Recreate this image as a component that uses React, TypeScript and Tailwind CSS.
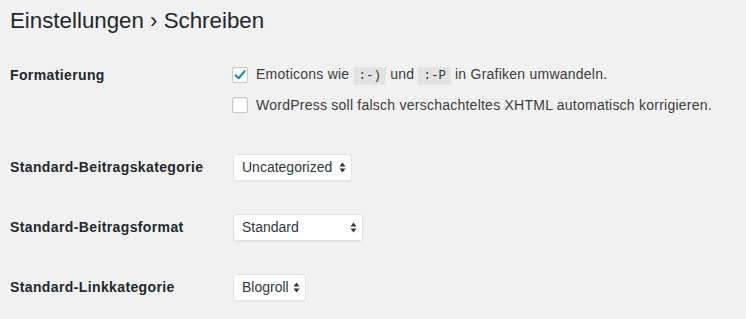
const Arrows = () => (
  <svg width="7" height="11" viewBox="0 0 7 11" className="shrink-0">
    <path d="M3.5 0.5 L6.5 4.5 L0.5 4.5 Z" fill="#32373c" />
    <path d="M3.5 10.5 L6.5 6.5 L0.5 6.5 Z" fill="#32373c" />
  </svg>
);

const Select = ({ value, width }: { value: string; width: string }) => (
  <div
    className={`${width} h-[27px] flex items-center justify-between pl-[8px] pr-[5px] bg-white border border-[#e2e2e2] rounded-[3px] shadow-[0_1px_1px_rgba(0,0,0,0.04)] text-[14px] text-[#32373c]`}
  >
    <span>{value}</span>
    <Arrows />
  </div>
);

const Checkbox = ({ checked }: { checked?: boolean }) => (
  <div className="w-[16px] h-[16px] shrink-0 bg-white border border-[#c8c8c8] rounded-[2px] shadow-[inset_0_1px_2px_rgba(0,0,0,0.08)] flex items-center justify-center">
    {checked && (
      <svg width="14" height="14" viewBox="0 0 14 14">
        <path d="M2.5 7.3 L5.6 10.3 L11.6 3.2" fill="none" stroke="#1e8cbe" strokeWidth="2.2" strokeLinecap="round" strokeLinejoin="round" />
      </svg>
    )}
  </div>
);

const Code = ({ children }: { children: string }) => (
  <code className="bg-[#e3e3e3] px-[5px] pt-[2px] pb-[2px] text-[12.5px] tracking-normal font-['Liberation_Mono',monospace] text-[#32373c]">
    {children}
  </code>
);

const rows = [
  { label: "Standard-Beitragskategorie", value: "Uncategorized", width: "w-[119px]" },
  { label: "Standard-Beitragsformat", value: "Standard", width: "w-[130px]" },
  { label: "Standard-Linkkategorie", value: "Blogroll", width: "w-[73px]" }
];

export default function App() {
  return (
    <div className="w-[746px] h-[319px] bg-[#f1f1f1] font-['Liberation_Sans',Arial,sans-serif] text-[#23282d] overflow-hidden">
      {/* TITLE */}
      <div className="h-[60px] pl-[10px] pt-[6px]">
        <h1 className="text-[22.3px] leading-[29px] font-normal text-[#23282d]">
          Einstellungen › Schreiben
        </h1>
      </div>

      {/* FORMATIERUNG */}
      <div className="flex pl-[10px] pb-[17px]">
        <div className="w-[222px] h-[30px] flex items-center text-[14px] font-bold tracking-[0.38px]">
          Formatierung
        </div>
        <div className="flex flex-col text-[14px] tracking-[0.24px] text-[#3c3c3c]">
          <label className="h-[30px] flex items-center gap-[8px]">
            <Checkbox checked />
            <span>
              Emoticons wie <Code>:-)</Code> und <Code>:-P</Code> in Grafiken umwandeln.
            </span>
          </label>
          <label className="h-[30px] flex items-center gap-[8px]">
            <Checkbox />
            <span>WordPress soll falsch verschachteltes XHTML automatisch korrigieren.</span>
          </label>
        </div>
      </div>

      {/* SELECT ROWS */}
      {rows.map((row) => (
        <div key={row.label} className="h-[60px] flex items-center pl-[10px]">
          <div className="w-[223px] text-[14px] font-bold tracking-[0.38px]">{row.label}</div>
          <Select value={row.value} width={row.width} />
        </div>
      ))}
    </div>
  );
}
